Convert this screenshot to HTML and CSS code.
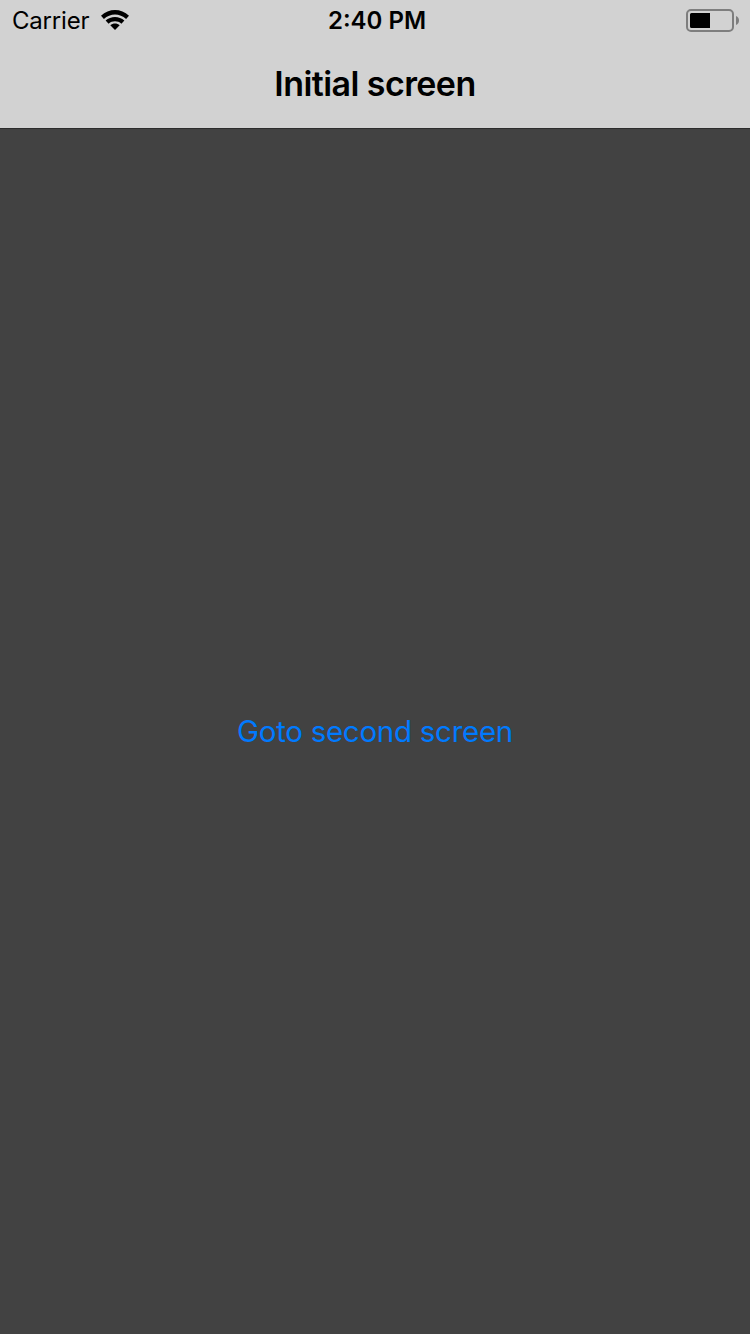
FILE: index.html
```html
<!DOCTYPE html>
<html lang="en">
<head>
<meta charset="utf-8">
<title>Initial screen</title>
<link rel="stylesheet" href="styles.css">
</head>
<body>
<div class="screen">
  <header class="header">
    <div class="status-bar">
      <div class="network">
        <span class="carrier">Carrier</span>
        <svg class="wifi" width="28" height="20" viewBox="0 0 28 20" aria-hidden="true">
          <path d="M0 5.7C7.8-1.9 20.2-1.9 28 5.7L25.1 8.9C18.8 2.9 9.2 2.9 2.9 8.9Z"/>
          <path d="M4.6 10.6C9.8 5.7 18.2 5.7 23.4 10.6L20.4 13.7C16.8 10.5 11.2 10.5 7.6 13.7Z"/>
          <path d="M9.3 15.2C12 12.8 16 12.8 18.7 15.2L14 20Z"/>
        </svg>
      </div>
      <time class="clock">2:40 PM</time>
      <svg class="battery" width="53" height="23" viewBox="0 0 53 23" aria-hidden="true">
        <rect class="battery-case" x="1" y="1" width="46" height="21" rx="4"/>
        <path d="M5.5 4H24V19H5.5A1.5 1.5 0 0 1 4 17.5V5.5A1.5 1.5 0 0 1 5.5 4Z"/>
        <path class="battery-cap" d="M50 7C54 8.5 54 14.5 50 16Z"/>
      </svg>
    </div>
    <div class="nav-bar"><h1 class="title">Initial screen</h1></div>
  </header>
  <main class="content">
    <button class="link" type="button">Goto second screen</button>
  </main>
</div>
</body>
</html>
```
FILE: styles.css
```css
body {
  margin: 0;
  font-family: Inter, "Liberation Sans", sans-serif;
}

.screen {
  display: flex;
  flex-direction: column;
  width: 750px;
  height: 1334px;
  background: #424242;
}

.header {
  height: 128px;
  background: #d2d2d2;
  border-bottom: 1px solid #2c2c2c;
  color: #000;
}

.status-bar {
  display: grid;
  grid-template-columns: 1fr auto 1fr;
  align-items: center;
  height: 40px;
  padding: 0 11px 0 12px;
  font-size: 24px;
  line-height: 38px;
}

.network {
  display: flex;
  align-items: center;
  gap: 12px;
}

.carrier {
  padding-top: 2px;
  letter-spacing: -0.2px;
}

.clock {
  padding: 2px 0 0 3px;
  font-weight: 600;
  letter-spacing: 0;
}

.battery {
  justify-self: end;
}

.battery-case {
  fill: none;
  stroke: #7e7e7e;
  stroke-width: 2;
}

.battery-cap {
  fill: #7e7e7e;
}

.nav-bar {
  display: flex;
  align-items: center;
  justify-content: center;
  height: 86px;
}

.title {
  margin: 0;
  font-size: 34px;
  font-weight: 600;
  letter-spacing: -0.57px;
}

.content {
  display: flex;
  flex: 1;
  align-items: center;
  justify-content: center;
}

.link {
  padding: 0 0 2px;
  border: 0;
  background: none;
  color: #007aff;
  font-family: inherit;
  font-size: 29.5px;
  line-height: 36px;
  letter-spacing: -0.28px;
}
```
